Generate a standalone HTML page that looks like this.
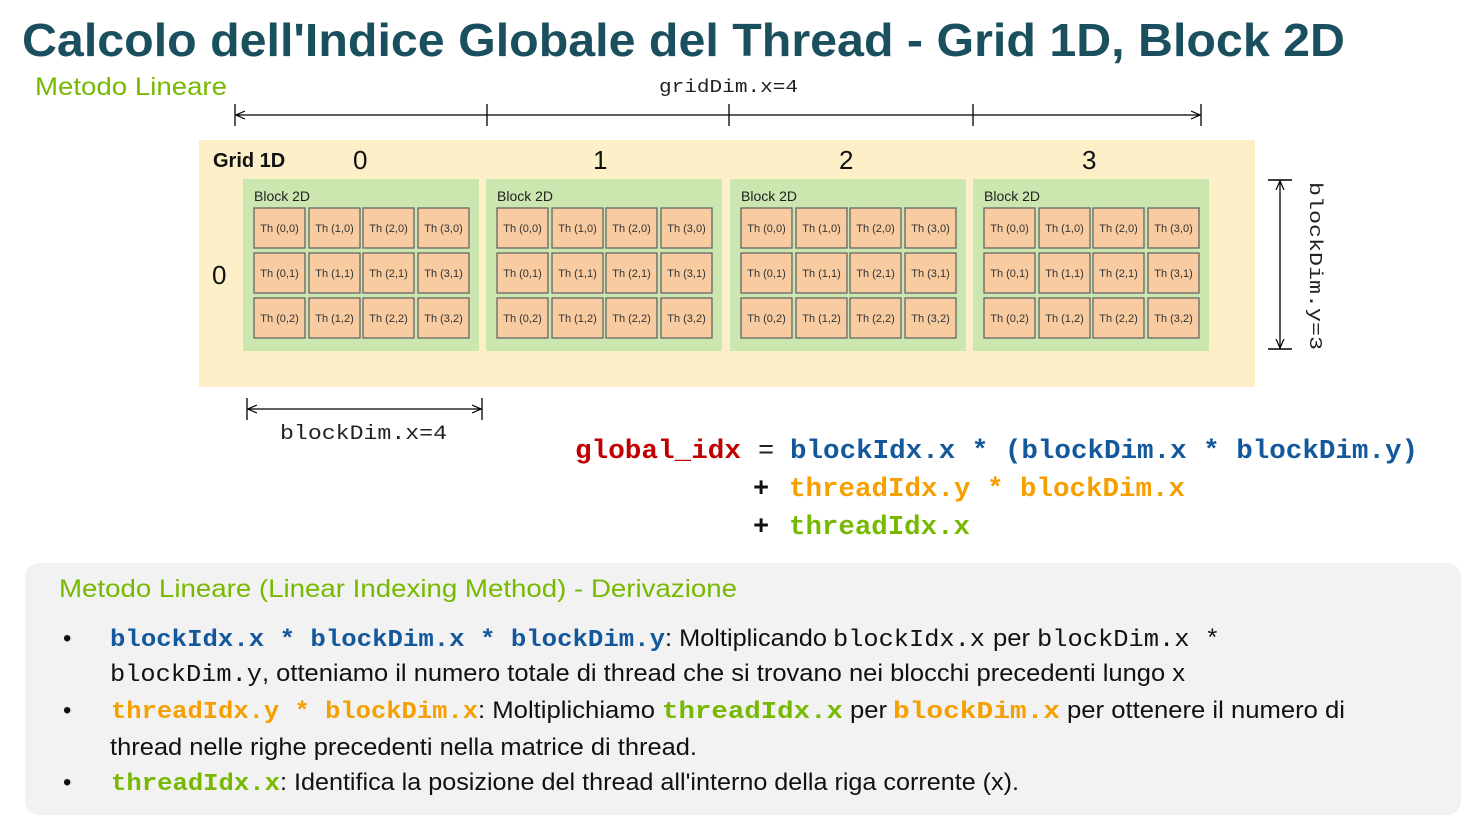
<!DOCTYPE html>
<html><head><meta charset="utf-8"><style>
html,body{margin:0;padding:0;background:#fff;}
svg{display:block;}
.s{font-family:"Liberation Sans",sans-serif;}
.m{font-family:"Liberation Mono",monospace;}
.t{font-family:"Liberation Sans",sans-serif;font-size:11px;fill:#333;text-anchor:middle;}
.c{fill:#f8cba0;stroke:#666;stroke-width:1.3;}
</style></head><body>
<svg width="1483" height="831" viewBox="0 0 1483 831" xmlns="http://www.w3.org/2000/svg">
<defs><marker id="a" markerWidth="10" markerHeight="10" refX="9" refY="5" orient="auto-start-reverse" markerUnits="userSpaceOnUse"><path d="M0,1 L9,5 L0,9" fill="none" stroke="#000" stroke-width="1.2"/></marker></defs>
<text class="s" x="22" y="56" font-size="46" font-weight="bold" fill="#1a4f5e" textLength="1323" lengthAdjust="spacingAndGlyphs">Calcolo dell'Indice Globale del Thread - Grid 1D, Block 2D</text>
<text class="s" x="35" y="95" font-size="25" fill="#76b900" textLength="192" lengthAdjust="spacingAndGlyphs">Metodo Lineare</text>
<text class="m" x="659" y="92" font-size="18" fill="#222" textLength="139" lengthAdjust="spacingAndGlyphs">gridDim.x=4</text>
<line x1="236" y1="115" x2="1200" y2="115" stroke="#000" stroke-width="1.3" marker-start="url(#a)" marker-end="url(#a)"/>
<g stroke="#000" stroke-width="1.3"><line x1="235" y1="104" x2="235" y2="126"/><line x1="487" y1="104" x2="487" y2="126"/><line x1="729" y1="104" x2="729" y2="126"/><line x1="973" y1="104" x2="973" y2="126"/><line x1="1201" y1="104" x2="1201" y2="126"/></g>
<rect x="199" y="140" width="1056" height="247" fill="#fdefc8"/>
<text class="s" x="213" y="167" font-size="20" font-weight="bold" fill="#111">Grid 1D</text>
<g class="s" font-size="26" fill="#111"><text x="353" y="169">0</text><text x="593" y="169">1</text><text x="839" y="169">2</text><text x="1082" y="169">3</text><text x="212" y="284">0</text></g>
<g fill="#cce6b0"><rect x="243" y="179" width="236" height="172"/><rect x="486" y="179" width="236" height="172"/><rect x="730" y="179" width="236" height="172"/><rect x="973" y="179" width="236" height="172"/></g>
<g class="s" font-size="14" fill="#222"><text x="254" y="201">Block 2D</text><text x="497" y="201">Block 2D</text><text x="741" y="201">Block 2D</text><text x="984" y="201">Block 2D</text></g>
<g transform="translate(243,0)">
<rect class="c" x="11" y="208" width="51" height="40"/><rect class="c" x="66" y="208" width="51" height="40"/><rect class="c" x="120" y="208" width="51" height="40"/><rect class="c" x="175" y="208" width="51" height="40"/>
<rect class="c" x="11" y="253" width="51" height="40"/><rect class="c" x="66" y="253" width="51" height="40"/><rect class="c" x="120" y="253" width="51" height="40"/><rect class="c" x="175" y="253" width="51" height="40"/>
<rect class="c" x="11" y="298" width="51" height="40"/><rect class="c" x="66" y="298" width="51" height="40"/><rect class="c" x="120" y="298" width="51" height="40"/><rect class="c" x="175" y="298" width="51" height="40"/>
<text class="t" x="36.5" y="232">Th (0,0)</text><text class="t" x="91.5" y="232">Th (1,0)</text><text class="t" x="145.5" y="232">Th (2,0)</text><text class="t" x="200.5" y="232">Th (3,0)</text>
<text class="t" x="36.5" y="277">Th (0,1)</text><text class="t" x="91.5" y="277">Th (1,1)</text><text class="t" x="145.5" y="277">Th (2,1)</text><text class="t" x="200.5" y="277">Th (3,1)</text>
<text class="t" x="36.5" y="322">Th (0,2)</text><text class="t" x="91.5" y="322">Th (1,2)</text><text class="t" x="145.5" y="322">Th (2,2)</text><text class="t" x="200.5" y="322">Th (3,2)</text>
</g>
<g transform="translate(486,0)">
<rect class="c" x="11" y="208" width="51" height="40"/><rect class="c" x="66" y="208" width="51" height="40"/><rect class="c" x="120" y="208" width="51" height="40"/><rect class="c" x="175" y="208" width="51" height="40"/>
<rect class="c" x="11" y="253" width="51" height="40"/><rect class="c" x="66" y="253" width="51" height="40"/><rect class="c" x="120" y="253" width="51" height="40"/><rect class="c" x="175" y="253" width="51" height="40"/>
<rect class="c" x="11" y="298" width="51" height="40"/><rect class="c" x="66" y="298" width="51" height="40"/><rect class="c" x="120" y="298" width="51" height="40"/><rect class="c" x="175" y="298" width="51" height="40"/>
<text class="t" x="36.5" y="232">Th (0,0)</text><text class="t" x="91.5" y="232">Th (1,0)</text><text class="t" x="145.5" y="232">Th (2,0)</text><text class="t" x="200.5" y="232">Th (3,0)</text>
<text class="t" x="36.5" y="277">Th (0,1)</text><text class="t" x="91.5" y="277">Th (1,1)</text><text class="t" x="145.5" y="277">Th (2,1)</text><text class="t" x="200.5" y="277">Th (3,1)</text>
<text class="t" x="36.5" y="322">Th (0,2)</text><text class="t" x="91.5" y="322">Th (1,2)</text><text class="t" x="145.5" y="322">Th (2,2)</text><text class="t" x="200.5" y="322">Th (3,2)</text>
</g>
<g transform="translate(730,0)">
<rect class="c" x="11" y="208" width="51" height="40"/><rect class="c" x="66" y="208" width="51" height="40"/><rect class="c" x="120" y="208" width="51" height="40"/><rect class="c" x="175" y="208" width="51" height="40"/>
<rect class="c" x="11" y="253" width="51" height="40"/><rect class="c" x="66" y="253" width="51" height="40"/><rect class="c" x="120" y="253" width="51" height="40"/><rect class="c" x="175" y="253" width="51" height="40"/>
<rect class="c" x="11" y="298" width="51" height="40"/><rect class="c" x="66" y="298" width="51" height="40"/><rect class="c" x="120" y="298" width="51" height="40"/><rect class="c" x="175" y="298" width="51" height="40"/>
<text class="t" x="36.5" y="232">Th (0,0)</text><text class="t" x="91.5" y="232">Th (1,0)</text><text class="t" x="145.5" y="232">Th (2,0)</text><text class="t" x="200.5" y="232">Th (3,0)</text>
<text class="t" x="36.5" y="277">Th (0,1)</text><text class="t" x="91.5" y="277">Th (1,1)</text><text class="t" x="145.5" y="277">Th (2,1)</text><text class="t" x="200.5" y="277">Th (3,1)</text>
<text class="t" x="36.5" y="322">Th (0,2)</text><text class="t" x="91.5" y="322">Th (1,2)</text><text class="t" x="145.5" y="322">Th (2,2)</text><text class="t" x="200.5" y="322">Th (3,2)</text>
</g>
<g transform="translate(973,0)">
<rect class="c" x="11" y="208" width="51" height="40"/><rect class="c" x="66" y="208" width="51" height="40"/><rect class="c" x="120" y="208" width="51" height="40"/><rect class="c" x="175" y="208" width="51" height="40"/>
<rect class="c" x="11" y="253" width="51" height="40"/><rect class="c" x="66" y="253" width="51" height="40"/><rect class="c" x="120" y="253" width="51" height="40"/><rect class="c" x="175" y="253" width="51" height="40"/>
<rect class="c" x="11" y="298" width="51" height="40"/><rect class="c" x="66" y="298" width="51" height="40"/><rect class="c" x="120" y="298" width="51" height="40"/><rect class="c" x="175" y="298" width="51" height="40"/>
<text class="t" x="36.5" y="232">Th (0,0)</text><text class="t" x="91.5" y="232">Th (1,0)</text><text class="t" x="145.5" y="232">Th (2,0)</text><text class="t" x="200.5" y="232">Th (3,0)</text>
<text class="t" x="36.5" y="277">Th (0,1)</text><text class="t" x="91.5" y="277">Th (1,1)</text><text class="t" x="145.5" y="277">Th (2,1)</text><text class="t" x="200.5" y="277">Th (3,1)</text>
<text class="t" x="36.5" y="322">Th (0,2)</text><text class="t" x="91.5" y="322">Th (1,2)</text><text class="t" x="145.5" y="322">Th (2,2)</text><text class="t" x="200.5" y="322">Th (3,2)</text>
</g>
<line x1="1280" y1="181" x2="1280" y2="348" stroke="#000" stroke-width="1.3" marker-start="url(#a)" marker-end="url(#a)"/>
<g stroke="#000" stroke-width="1.5"><line x1="1268" y1="180" x2="1292" y2="180"/><line x1="1268" y1="349" x2="1292" y2="349"/></g>
<text class="m" transform="translate(1310,182) rotate(90)" font-size="18" fill="#222" textLength="168" lengthAdjust="spacingAndGlyphs">blockDim.y=3</text>
<line x1="248" y1="409" x2="481" y2="409" stroke="#000" stroke-width="1.3" marker-start="url(#a)" marker-end="url(#a)"/>
<g stroke="#000" stroke-width="1.3"><line x1="247" y1="398" x2="247" y2="420"/><line x1="482" y1="398" x2="482" y2="420"/></g>
<text class="m" x="280" y="439" font-size="20" fill="#222" textLength="167" lengthAdjust="spacingAndGlyphs">blockDim.x=4</text>
<g class="m" font-size="27" font-weight="bold">
<text x="575" y="458" fill="#c00000" textLength="166" lengthAdjust="spacingAndGlyphs">global_idx</text>
<text x="758" y="458" fill="#222" font-weight="normal">=</text>
<text x="790" y="458" fill="#14589c" textLength="628" lengthAdjust="spacingAndGlyphs">blockIdx.x * (blockDim.x * blockDim.y)</text>
<text x="753" y="496" fill="#111">+</text>
<text x="789" y="496" fill="#f5a000" textLength="396" lengthAdjust="spacingAndGlyphs">threadIdx.y * blockDim.x</text>
<text x="753" y="534" fill="#111">+</text>
<text x="789" y="534" fill="#76b900" textLength="181" lengthAdjust="spacingAndGlyphs">threadIdx.x</text>
</g>
<rect x="25" y="563" width="1436" height="252" rx="14" fill="#f2f2f2"/>
<text class="s" x="59" y="597" font-size="25" fill="#76b900" textLength="678" lengthAdjust="spacingAndGlyphs">Metodo Lineare (Linear Indexing Method) - Derivazione</text>
<g class="s" font-size="24" fill="#111"><text x="63" y="646">•</text><text x="63" y="718">•</text><text x="63" y="790">•</text></g>
<g font-size="24" fill="#111">
<text class="m" x="110" y="646" font-weight="bold" fill="#14589c" textLength="555" lengthAdjust="spacingAndGlyphs">blockIdx.x * blockDim.x * blockDim.y</text>
<text class="s" x="665" y="646" textLength="162" lengthAdjust="spacingAndGlyphs">: Moltiplicando</text>
<text class="m" x="833" y="646" textLength="152" lengthAdjust="spacingAndGlyphs">blockIdx.x</text>
<text class="s" x="993" y="646" textLength="37" lengthAdjust="spacingAndGlyphs">per</text>
<text class="m" x="1037" y="646" textLength="183" lengthAdjust="spacingAndGlyphs">blockDim.x *</text>
<text class="m" x="110" y="681" textLength="152" lengthAdjust="spacingAndGlyphs">blockDim.y</text>
<text class="s" x="262" y="681" textLength="923" lengthAdjust="spacingAndGlyphs">, otteniamo il numero totale di thread che si trovano nei blocchi precedenti lungo x</text>
<text class="m" x="111" y="718" font-weight="bold" fill="#f5a000" textLength="367" lengthAdjust="spacingAndGlyphs">threadIdx.y * blockDim.x</text>
<text class="s" x="478" y="718" textLength="177" lengthAdjust="spacingAndGlyphs">: Moltiplichiamo</text>
<text class="m" x="662" y="718" font-weight="bold" fill="#76b900" textLength="181" lengthAdjust="spacingAndGlyphs">threadIdx.x</text>
<text class="s" x="850" y="718" textLength="37" lengthAdjust="spacingAndGlyphs">per</text>
<text class="m" x="893" y="718" font-weight="bold" fill="#f5a000" textLength="167" lengthAdjust="spacingAndGlyphs">blockDim.x</text>
<text class="s" x="1067" y="718" textLength="278" lengthAdjust="spacingAndGlyphs">per ottenere il numero di</text>
<text class="s" x="110" y="755" textLength="587" lengthAdjust="spacingAndGlyphs">thread nelle righe precedenti nella matrice di thread.</text>
<text class="m" x="111" y="790" font-weight="bold" fill="#76b900" textLength="169" lengthAdjust="spacingAndGlyphs">threadIdx.x</text>
<text class="s" x="280" y="790" textLength="739" lengthAdjust="spacingAndGlyphs">: Identifica la posizione del thread all'interno della riga corrente (x).</text>
</g>
</svg>
</body></html>
